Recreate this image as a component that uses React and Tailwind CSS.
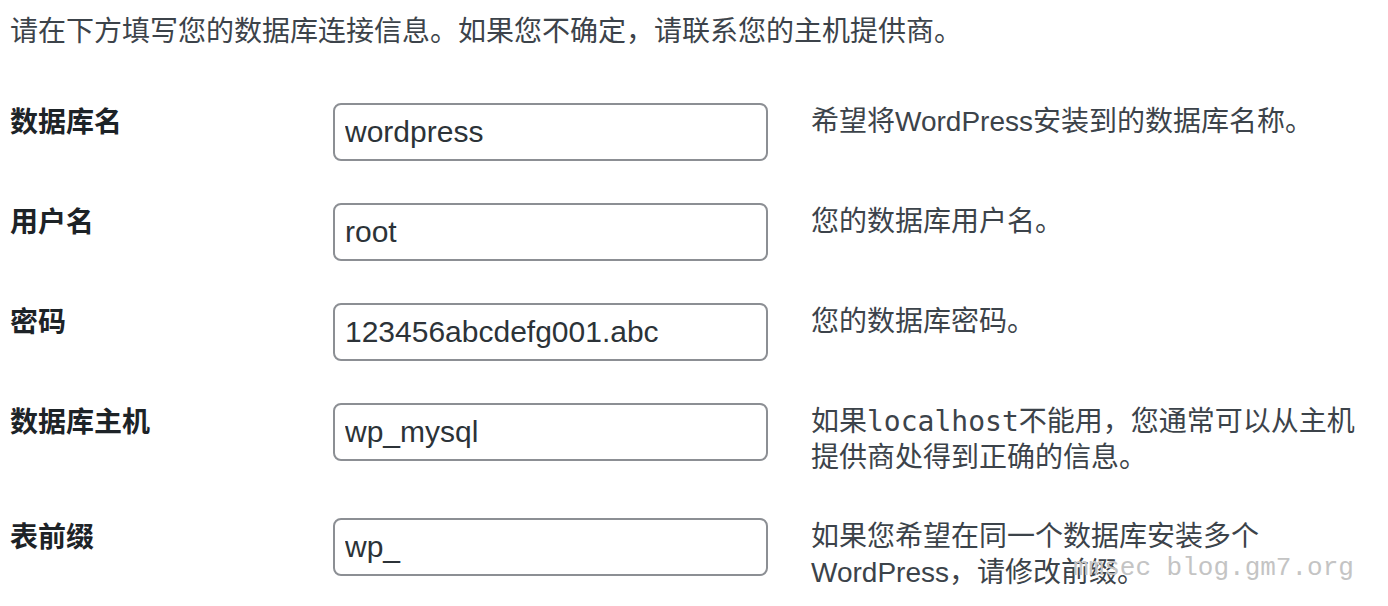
import React from "react";

const rows = [
  { label: "数据库名", value: "wordpress", desc: <>希望将WordPress安装到的数据库名称。</> },
  { label: "用户名", value: "root", desc: <>您的数据库用户名。</> },
  { label: "密码", value: "123456abcdefg001.abc", desc: <>您的数据库密码。</> },
  {
    label: "数据库主机",
    value: "wp_mysql",
    desc: (
      <>
        如果<code className="font-['DejaVu_Sans_Mono',monospace]">localhost</code>
        不能用，您通常可以从主机提供商处得到正确的信息。
      </>
    ),
  },
  { label: "表前缀", value: "wp_", desc: <>如果您希望在同一个数据库安装多个WordPress，请修改前缀。</> },
];

export default function App() {
  return (
    <div className="relative h-[606px] overflow-hidden bg-white pl-[10px] font-['Liberation_Sans','Noto_Sans_CJK_SC',sans-serif]">
      {/* intro */}
      <p className="pt-[12px] text-[28px] leading-[40px] text-[#3c434a]">
        请在下方填写您的数据库连接信息。如果您不确定，请联系您的主机提供商。
      </p>

      {/* form table */}
      <div className="mt-[30px] flex flex-col">
        {rows.map((row) => (
          <div key={row.label} className="flex items-start py-[21px]">
            <div className="mt-[2px] w-[323px] shrink-0 text-[28px] font-semibold leading-[36px] text-[#1d2327]">
              {row.label}
            </div>
            <input
              readOnly
              value={row.value}
              className="h-[58px] w-[435px] shrink-0 rounded-[8px] border-2 border-[#8c8f94] bg-white px-[10px] text-[30px] text-[#2c3338] outline-none"
            />
            <div className="ml-[43px] mt-[1px] w-[560px] shrink-0 text-[28px] leading-[36px] text-[#3c434a]">
              {row.desc}
            </div>
          </div>
        ))}
      </div>

      {/* watermark */}
      <span className="pointer-events-none absolute left-[1073px] top-[552px] whitespace-nowrap font-['Liberation_Mono',monospace] text-[26px] leading-[32px] text-[#c4c4c4]">
        mmsec blog.gm7.org
      </span>
    </div>
  );
}
